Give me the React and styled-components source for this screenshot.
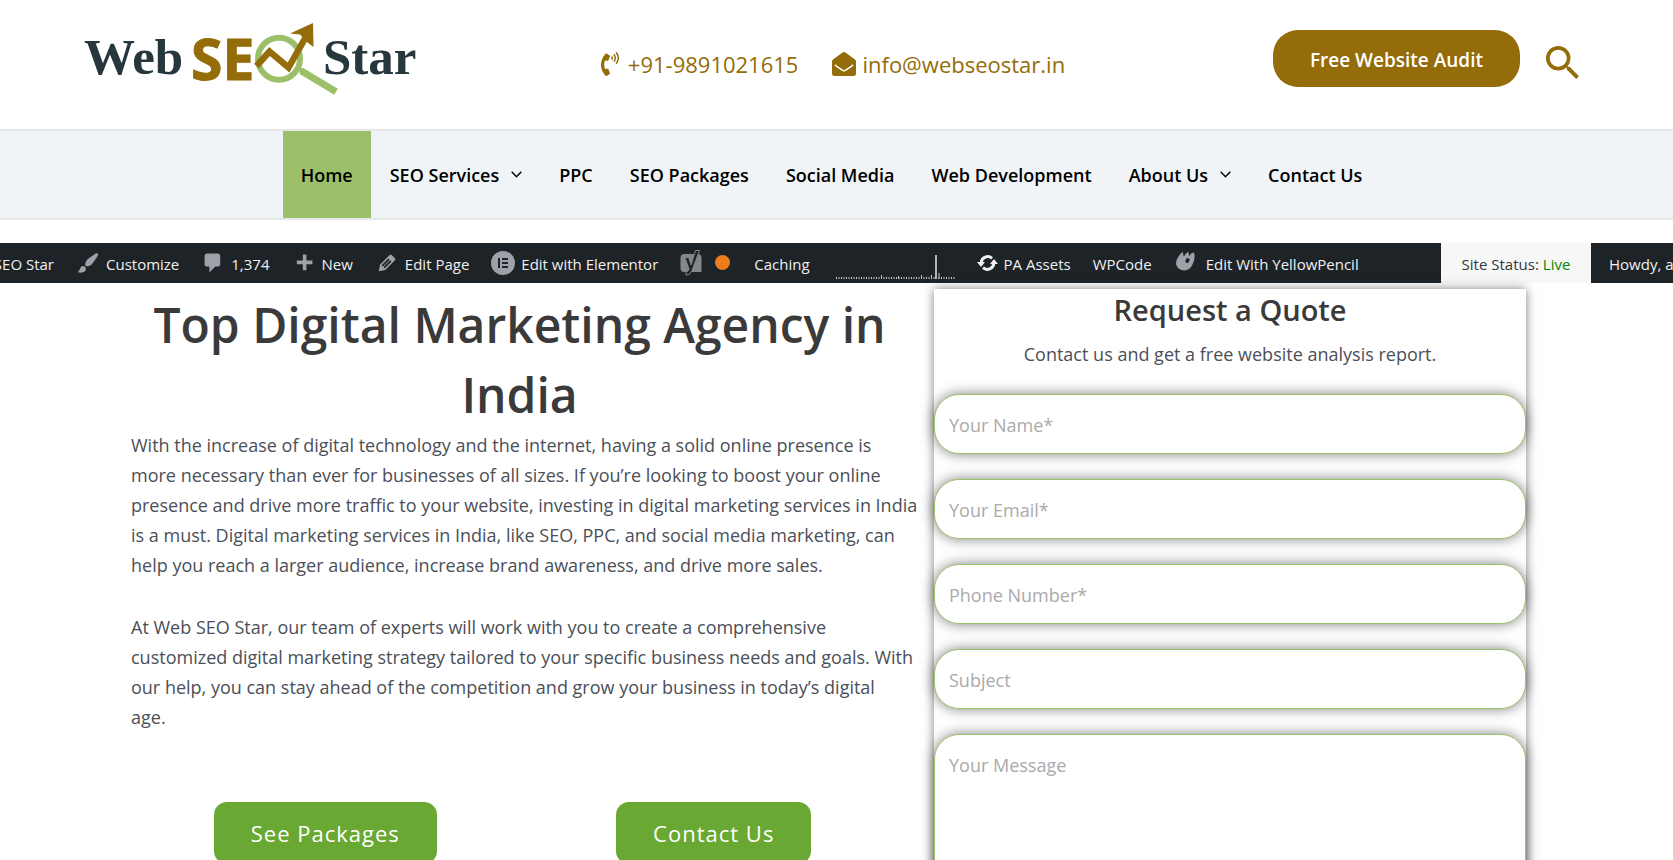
import React from "react";
import styled, { createGlobalStyle } from "styled-components";
import { FaPhoneVolume, FaEnvelopeOpen } from "react-icons/fa";

const gold = "#946c09";
const green = "#9cc069";

const GlobalStyle = createGlobalStyle`
  *, *::before, *::after { box-sizing: border-box; }
  body {
    margin: 0;
    background: #fff;
    color: #4b4f58;
    font-family: "Open Sans", "Noto Sans", sans-serif;
    font-size: 18px;
    line-height: 30px;
  }
  a { color: inherit; text-decoration: none; }
  button { font: inherit; border: 0; cursor: pointer; }
`;

const Page = styled.div`
  min-height: 100vh;
  overflow: hidden;
`;

/* ---------- header ---------- */

const Header = styled.header`
  display: grid;
  grid-template-columns: 1fr auto 1fr;
  align-items: center;
  height: 129px;
  padding: 0 94px 12px 84px;
`;

const LogoLink = styled.a`
  display: flex;
`;

const LogoDrawing = styled.svg`
  flex: none;
  overflow: visible;
`;

const Contacts = styled.div`
  display: flex;
  gap: 34px;
  padding-top: 10px;
  color: ${gold};
`;

const ContactLink = styled.a`
  display: flex;
  align-items: center;
  gap: 6px;
  font-size: 22px;
  white-space: nowrap;
`;

const Actions = styled.div`
  display: flex;
  justify-content: flex-end;
  align-items: center;
  gap: 26px;
`;

const AuditButton = styled.button`
  height: 57px;
  padding: 2px 37px 0;
  border-radius: 25px;
  background: ${gold};
  color: #fff;
  font-size: 19px;
  font-weight: 600;
  white-space: nowrap;
`;

const SearchButton = styled.button`
  display: flex;
  margin-top: 8px;
  padding: 0;
  background: none;
  color: ${gold};
`;

/* ---------- main navigation ---------- */

const Nav = styled.nav`
  display: flex;
  justify-content: center;
  gap: 1px;
  padding-right: 10px;
  border-top: 2px solid #e6e7e8;
  border-bottom: 2px solid #e6e7e8;
  background: #f0f4f7;
`;

const NavLink = styled.a`
  display: flex;
  align-items: center;
  gap: 12px;
  height: 87px;
  padding: 0 18px;
  background: ${(p) => (p.$active ? green : "transparent")};
  color: #000;
  font-weight: 600;
  white-space: nowrap;
`;

/* ---------- admin bar ---------- */

const AdminBar = styled.div`
  display: flex;
  gap: 22px;
  height: 40px;
  margin-top: 23px;
  overflow: hidden;
  background: #1d2327;
  color: #f0f0f1;
  font-size: 15px;
  white-space: nowrap;
`;

const SiteName = styled.a`
  display: flex;
  align-items: center;
  justify-content: flex-end;
  flex: 0 0 54px;
  min-width: 0;
  padding-top: 2px;
`;

const BarItem = styled.a`
  display: flex;
  flex: none;
  align-items: center;
  gap: 6px;
`;

const BarText = styled.span`
  padding-top: 2px;
`;

const BarIcon = styled.svg`
  flex: none;
  color: #9ca2a7;
`;

const StatsItem = styled(BarItem)`
  padding-left: 4px;
`;

const ScoreDot = styled.span`
  width: 15px;
  height: 15px;
  margin: 0 2px 2px 7px;
  border-radius: 50%;
  background: #ee7c1b;
`;

const BarEnd = styled.div`
  display: flex;
  flex: none;
  margin-left: auto;
`;

const SiteStatus = styled.a`
  display: flex;
  align-items: center;
  gap: 4px;
  width: 150px;
  justify-content: center;
  padding-top: 2px;
  background: #f7f7f7;
  color: #32373c;
`;

const Live = styled.span`
  color: #008a00;
`;

const Account = styled.a`
  display: flex;
  align-items: center;
  width: 82px;
  padding: 2px 0 0 18px;
`;

/* ---------- content ---------- */

const Main = styled.main`
  display: grid;
  grid-template-columns: 777fr 592fr;
  gap: 26px;
  padding: 6px 147px 40px 131px;
`;

const Intro = styled.section`
  min-width: 0;
  padding-top: 1px;
`;

const Title = styled.h1`
  margin: 0;
  color: #3a3a3a;
  font-size: 48px;
  font-weight: 600;
  line-height: 70px;
  text-align: center;
`;

const Copy = styled.p`
  margin: 0 0 32px;
  white-space: nowrap;
`;

const ButtonRow = styled.div`
  display: grid;
  grid-template-columns: 1fr 1fr;
  justify-items: center;
  padding-top: 38px;
`;

const GreenButton = styled.a`
  padding: 16px 37px;
  border-radius: 13px;
  background: #69a832;
  color: #fff;
  font-size: 22px;
  letter-spacing: 1px;
  white-space: nowrap;
`;

const QuoteCard = styled.form`
  display: flex;
  flex-direction: column;
  gap: 25px;
  min-width: 0;
  box-shadow: 0 0 10px rgba(0, 0, 0, 0.5);
`;

const QuoteHead = styled.div`
  text-align: center;
`;

const QuoteTitle = styled.h2`
  margin: 0;
  color: #3a3a3a;
  font-size: 29px;
  font-weight: 600;
  line-height: 42px;
`;

const QuoteNote = styled.p`
  margin: 0;
  padding-top: 8px;
`;

const Field = styled.input`
  display: block;
  width: 100%;
  height: ${(p) => (p.as === "textarea" ? 190 : 60)}px;
  margin: 0;
  padding: ${(p) => (p.as === "textarea" ? "15px 14px" : "2px 14px 0")};
  border: 1px solid ${green};
  border-radius: 25px;
  outline: 0;
  background: #fff;
  box-shadow: 0 0 13px rgba(0, 0, 0, 0.5);
  color: #666;
  font: inherit;
  resize: none;

  &::placeholder {
    color: #aaa;
    opacity: 1;
  }
`;

/* ---------- drawings ---------- */

function Logo() {
  return (
    <LogoDrawing width="340" height="75" viewBox="84 21 340 75" role="img" aria-label="Web SEO Star">
      <g fill="#26373d" fontFamily='"Liberation Serif", serif' fontWeight="700" fontSize="51">
        <text x="84" y="74">Web</text>
        <text x="323" y="74">Star</text>
      </g>
      <text x="191" y="80" fill={gold} stroke={gold} strokeWidth="1" fontFamily='"Open Sans", sans-serif' fontWeight="700" fontSize="57">SE</text>
      <circle cx="279" cy="58.7" r="21" fill="none" stroke={green} strokeWidth="6" />
      <path d="M299 69l8 4" stroke={green} strokeWidth="4" />
      <path d="M304 72.5l29 17.5" stroke={green} strokeWidth="7" strokeLinecap="square" />
      <path d="M256.5 66l13-14.5L288.500 67.500 307 35" fill="none" stroke={gold} strokeWidth="6.500" />
      <path d="M313 23l.5 24-7.500-5.800L300 34.500l-10-1z" fill={gold} />
    </LogoDrawing>
  );
}

function SearchIcon() {
  return (
    <svg width="33" height="33" viewBox="3 3 17.500 17.500" fill="currentColor" aria-hidden="true">
      <path d="M15.500 14h-.79l-.28-.27A6.471 6.471 0 0 0 16 9.500 6.500 6.500 0 1 0 9.500 16c1.610 0 3.090-.59 4.230-1.570l.27.28v.79l5 4.990L20.490 19l-4.990-5zm-6 0C7.010 14 5 11.990 5 9.500S7.010 5 9.500 5 14 7.010 14 9.500 11.990 14 9.500 14z" />
    </svg>
  );
}

function Chevron() {
  return (
    <svg width="11" height="7" viewBox="0 0 11 7" fill="none" stroke="#000" strokeWidth="1.400" aria-hidden="true">
      <path d="M.7.8l4.800 4.900L10.300.8" />
    </svg>
  );
}

const dashicons = {
  brush:
    "M18.330 3.570s.27-.8-.31-1.360c-.53-.52-1.220-.24-1.220-.24-.61.3-5.760 3.470-7.670 5.570-.86.96-2.060 3.790-1.090 4.820.92.98 3.960-.17 4.790-1 2.060-2.060 5.210-7.170 5.500-7.790zM1.400 17.650c2.370-1.560 1.460-3.410 3.230-4.640.93-.65 2.220-.62 3.080.29.63.67.8 2.570-.16 3.460-1.570 1.450-4 1.550-6.150.89z",
  comment:
    "M5 2h9c1.100 0 2 .9 2 2v7c0 1.100-.9 2-2 2h-2l-5 5v-5H5c-1.100 0-2-.9-2-2V4c0-1.100.9-2 2-2z",
  plus: "M17 8v3h-5v5H9v-5H4V8h5V3h3v5h5z",
  edit:
    "M13.890 3.390l2.710 2.720c.46.46.42 1.240.03 1.640l-8.010 8.020-5.560 1.160 1.160-5.580s7.600-7.630 7.990-8.030c.39-.39 1.220-.39 1.680.07zm-2.730 2.790l-5.590 5.610 1.110 1.110 5.540-5.650zm-2.970 8.230l5.580-5.600-1.070-1.080-5.590 5.600z",
};

function Dashicon({ name }) {
  return (
    <BarIcon width="24" height="24" viewBox="0 0 20 20" fill="currentColor" aria-hidden="true">
      <path d={dashicons[name]} />
    </BarIcon>
  );
}

function ElementorIcon() {
  return (
    <BarIcon width="24" height="24" viewBox="0 0 24 24" aria-hidden="true">
      <circle cx="12" cy="12" r="12" fill="currentColor" />
      <path d="M7 7h2v10H7zM11 7h6v2h-6zM11 11h6v2h-6zM11 15h6v2h-6z" fill="#1d2327" />
    </BarIcon>
  );
}

function YoastIcon() {
  return (
    <BarIcon width="22" height="28" viewBox="0 0 22 28" aria-hidden="true">
      <path d="M4 5h14q3.500 0 3.500 4v14H4q-3.500 0-3.500-4V9q0-4 3.500-4z" fill="#82878c" />
      <path d="M15.500 1.500h4L12 21.500q-2 5-6 4.700v-3.500q2.700-.2 3-2.700L5 8.500h3.600l2.500 7.500z" fill="#1d2327" stroke="#82878c" strokeWidth="1" />
    </BarIcon>
  );
}

function Sparkline() {
  return (
    <BarIcon width="119" height="40" viewBox="0 0 119 40" aria-hidden="true">
      <path d="M0 35h119" stroke="#c3c4c7" strokeWidth="2" strokeDasharray="1 1.500" />
      <path d="M45.500 32v4M62.500 33v3M85.500 32v4M95.500 32v4M103 30v6" stroke="#c3c4c7" />
      <path d="M100 12v24" stroke="#b4b6b8" strokeWidth="2" />
    </BarIcon>
  );
}

function RefreshIcon() {
  return (
    <BarIcon width="21" height="18" viewBox="0 0 21 18" fill="none" aria-hidden="true">
      <g stroke="#f0f0f1" strokeWidth="3">
        <path d="M16.800 9.500A6.500 6.500 0 0 1 6 13.700" />
        <path d="M4.200 8.500A6.500 6.500 0 0 1 15 4.300" />
      </g>
      <path d="M13 10h8l-4-5zM0 8h8l-4 5z" fill="#f0f0f1" />
    </BarIcon>
  );
}

function YellowPencilIcon() {
  return (
    <BarIcon width="26" height="28" viewBox="0 0 26 28" aria-hidden="true">
      <path
        d="M3 10q2-4 5-6.500 1-.5 1.200.5-.4 2 .8 3.500Q11.500 4 14 3.200q1-.2.800.8-.3 2 .7 3Q16.500 4 19 3.500q1.500 0 1.500 2 .5 5-1.500 9-3 7-9 7Q3 20.500 2 15q0-3 1-5z"
        fill="currentColor"
      />
      <ellipse cx="13.500" cy="11.500" rx="2" ry="2.600" fill="#1d2327" transform="rotate(25 13.500 11.500)" />
    </BarIcon>
  );
}

/* ---------- page ---------- */

const navItems = [
  { label: "Home", active: true },
  { label: "SEO Services", menu: true },
  { label: "PPC" },
  { label: "SEO Packages" },
  { label: "Social Media" },
  { label: "Web Development" },
  { label: "About Us", menu: true },
  { label: "Contact Us" },
];

const fields = [
  { name: "Your Name*", type: "text" },
  { name: "Your Email*", type: "email" },
  { name: "Phone Number*", type: "tel" },
  { name: "Subject", type: "text" },
];

export default function App() {
  return (
    <Page>
      <GlobalStyle />
      <Header>
        <LogoLink href="#home">
          <Logo />
        </LogoLink>
        <Contacts>
          <ContactLink href="tel:+919891021615">
            <FaPhoneVolume size={24} />
            +91-9891021615
          </ContactLink>
          <ContactLink href="mailto:info@webseostar.in">
            <FaEnvelopeOpen size={24} />
            info@webseostar.in
          </ContactLink>
        </Contacts>
        <Actions>
          <AuditButton type="button">Free Website Audit</AuditButton>
          <SearchButton type="button" aria-label="Search">
            <SearchIcon />
          </SearchButton>
        </Actions>
      </Header>

      <Nav>
        {navItems.map((item) => (
          <NavLink key={item.label} href="#menu" $active={item.active}>
            {item.label}
            {item.menu && <Chevron />}
          </NavLink>
        ))}
      </Nav>

      <AdminBar>
        <SiteName href="#site">SEO Star</SiteName>
        <BarItem href="#customize">
          <Dashicon name="brush" />
          <BarText>Customize</BarText>
        </BarItem>
        <BarItem href="#comments">
          <Dashicon name="comment" />
          <BarText>1,374</BarText>
        </BarItem>
        <BarItem href="#new">
          <Dashicon name="plus" />
          <BarText>New</BarText>
        </BarItem>
        <BarItem href="#edit">
          <Dashicon name="edit" />
          <BarText>Edit Page</BarText>
        </BarItem>
        <BarItem href="#elementor">
          <ElementorIcon />
          <BarText>Edit with Elementor</BarText>
        </BarItem>
        <BarItem href="#yoast" aria-label="Yoast SEO">
          <YoastIcon />
          <ScoreDot />
        </BarItem>
        <BarItem href="#caching">
          <BarText>Caching</BarText>
        </BarItem>
        <StatsItem href="#stats" aria-label="Views">
          <Sparkline />
        </StatsItem>
        <BarItem href="#assets">
          <RefreshIcon />
          <BarText>PA Assets</BarText>
        </BarItem>
        <BarItem href="#wpcode">
          <BarText>WPCode</BarText>
        </BarItem>
        <BarItem href="#yellowpencil">
          <YellowPencilIcon />
          <BarText>Edit With YellowPencil</BarText>
        </BarItem>
        <BarEnd>
          <SiteStatus href="#status">
            Site Status: <Live>Live</Live>
          </SiteStatus>
          <Account href="#account">Howdy, a</Account>
        </BarEnd>
      </AdminBar>

      <Main>
        <Intro>
          <Title>Top Digital Marketing Agency in India</Title>
          <Copy>
            With the increase of digital technology and the internet, having a solid online presence is
            <br />
            more necessary than ever for businesses of all sizes. If you’re looking to boost your online
            <br />
            presence and drive more traffic to your website, investing in digital marketing services in India
            <br />
            is a must. Digital marketing services in India, like SEO, PPC, and social media marketing, can
            <br />
            help you reach a larger audience, increase brand awareness, and drive more sales.
          </Copy>
          <Copy>
            At Web SEO Star, our team of experts will work with you to create a comprehensive
            <br />
            customized digital marketing strategy tailored to your specific business needs and goals. With
            <br />
            our help, you can stay ahead of the competition and grow your business in today’s digital
            <br />
            age.
          </Copy>
          <ButtonRow>
            <GreenButton href="#packages">See Packages</GreenButton>
            <GreenButton href="#contact">Contact Us</GreenButton>
          </ButtonRow>
        </Intro>

        <QuoteCard>
          <QuoteHead>
            <QuoteTitle>Request a Quote</QuoteTitle>
            <QuoteNote>Contact us and get a free website analysis report.</QuoteNote>
          </QuoteHead>
          {fields.map((f) => (
            <Field key={f.name} type={f.type} placeholder={f.name} aria-label={f.name} />
          ))}
          <Field as="textarea" placeholder="Your Message" aria-label="Your Message" />
        </QuoteCard>
      </Main>
    </Page>
  );
}
